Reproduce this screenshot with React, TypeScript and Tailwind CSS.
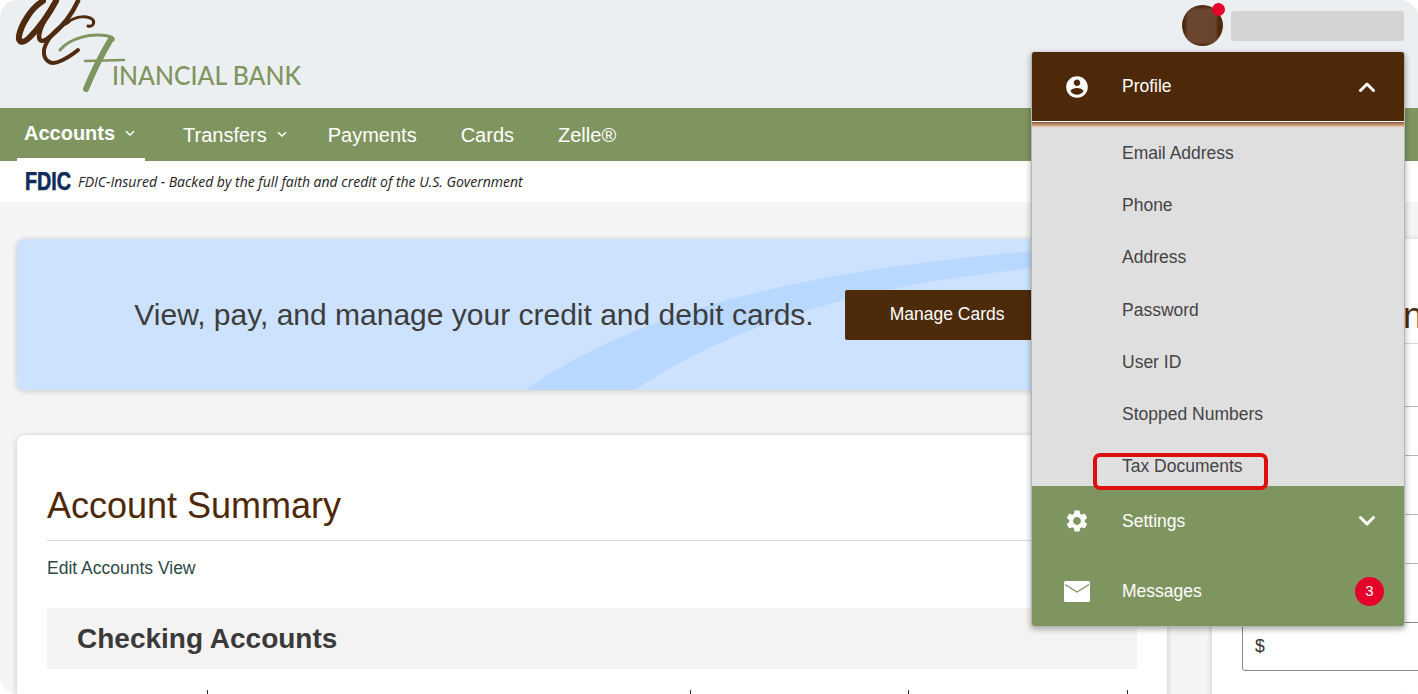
import React from 'react';

const brown = 'M0 0';

const Logo = () => (
  <svg width="320" height="100" viewBox="0 0 320 100" className="block">
    {/* script W and C */}
    <g fill="none" stroke="#4f2a0e" strokeLinecap="round" strokeLinejoin="round">
      <path d="M43 1C31 8 21 25 19 36C18 43 23 44 30 37C40 27 50 12 56 1" strokeWidth="6" />
      <path d="M56 1C48 13 40 26 39 36C39 43 44 42 51 36C62 27 72 14 78 1" strokeWidth="4.5" />
      <path d="M68 22C56 28 46 40 44 50C43 60 50 65 58 62C66 59 72 55 78 50" strokeWidth="4" />
      <path d="M68 22C76 16 88 15 93 20C95 24 92 27 88 26" strokeWidth="3" />
    </g>
    {/* green F */}
    <g fill="none" stroke="#7f9560" strokeLinecap="round">
      <path d="M60 50C70 38 90 33 108 36C112 37 114 38 113 40" strokeWidth="3" />
      <path d="M111 39C102 54 93 72 86 89" strokeWidth="6" />
      <path d="M85 61L124 60" strokeWidth="2.5" />
    </g>
    <text x="112" y="85" fill="#7f9560" fontFamily="Lato, sans-serif" fontSize="26" fontWeight="500" textLength="189" lengthAdjust="spacingAndGlyphs">INANCIAL BANK</text>
  </svg>
);

const Chevron = ({ up }: { up?: boolean }) => (
  <svg width="18" height="12" viewBox="0 0 18 12" fill="none" stroke="#fff" strokeWidth="3" strokeLinecap="round" strokeLinejoin="round">
    <path d={up ? 'M2.5 9.5L9 3l6.5 6.5' : 'M2.5 2.5L9 9l6.5-6.5'} />
  </svg>
);

const SmallChevron = () => (
  <svg width="10" height="7" viewBox="0 0 10 7" fill="none" stroke="#fff" strokeWidth="1.5">
    <path d="M1 1.2L5 5l4-3.8" />
  </svg>
);

const profileItems = ['Email Address', 'Phone', 'Address', 'Password', 'User ID', 'Stopped Numbers'];

const ProfileMenu = () => (
  <div className="absolute left-[1031px] top-[52px] z-10 w-[374px] overflow-hidden rounded-[3px] border border-[#b5b5b5] border-t-0 shadow-[0_2px_6px_rgba(0,0,0,0.35)]">
    <div className="flex h-[69px] items-center bg-[#4d2909] pl-[32px] pr-[28px] text-[17.5px] text-white">
      <svg width="26" height="26" viewBox="0 0 24 24" fill="#fff">
        <path d="M12 2C6.48 2 2 6.48 2 12s4.48 10 10 10 10-4.48 10-10S17.52 2 12 2zm0 3c1.66 0 3 1.34 3 3s-1.34 3-3 3-3-1.34-3-3 1.34-3 3-3zm0 14.2c-2.5 0-4.71-1.28-6-3.22.03-1.99 4-3.08 6-3.08 1.99 0 5.97 1.09 6 3.08-1.29 1.94-3.5 3.22-6 3.22z" />
      </svg>
      <span className="ml-[32px] flex-1">Profile</span>
      <Chevron up />
    </div>
    <div className="h-[1px] bg-white" />
    <div className="h-[5px] bg-gradient-to-b from-[#8a5a35] to-[#f0c8a5]" />
    <div className="flex h-[359px] flex-col bg-[#dfdfdf] pl-[90px] pt-[-1px] text-[17.5px] text-[#444444]">
      {profileItems.map((item) => (
        <div key={item} className="flex h-[52.2px] shrink-0 items-center">{item}</div>
      ))}
      <div className="relative flex h-[52.2px] shrink-0 items-center">
        Tax Documents
        <span className="absolute left-[-29px] top-[13px] h-[37px] w-[175px] rounded-[7px] border-4 border-[#dd0f0f]" />
      </div>
    </div>
    <div className="h-[140px] bg-[#7f9560] text-[17.5px] text-white">
      <div className="flex h-[70px] items-center pl-[32px] pr-[28px]">
        <svg width="26" height="26" viewBox="0 0 24 24" fill="#fff">
          <path d="M19.14 12.94c.04-.3.06-.61.06-.94 0-.32-.02-.64-.07-.94l2.03-1.58c.18-.14.23-.41.12-.61l-1.92-3.32c-.12-.22-.37-.29-.59-.22l-2.39.96c-.5-.38-1.03-.7-1.62-.94l-.36-2.54c-.04-.24-.24-.41-.48-.41h-3.84c-.24 0-.43.17-.47.41l-.36 2.54c-.59.24-1.13.57-1.62.94l-2.39-.96c-.22-.08-.47 0-.59.22L2.74 8.87c-.12.21-.08.47.12.61l2.03 1.58c-.05.3-.09.63-.09.94s.02.64.07.94l-2.03 1.58c-.18.14-.23.41-.12.61l1.92 3.32c.12.22.37.29.59.22l2.39-.96c.5.38 1.03.7 1.62.94l.36 2.54c.05.24.24.41.48.41h3.84c.24 0 .44-.17.47-.41l.36-2.54c.59-.24 1.13-.56 1.62-.94l2.39.96c.22.08.47 0 .59-.22l1.92-3.32c.12-.22.07-.47-.12-.61l-2.01-1.58zM12 15.6c-1.98 0-3.6-1.62-3.6-3.6s1.62-3.6 3.6-3.6 3.6 1.62 3.6 3.6-1.62 3.6-3.6 3.6z" />
        </svg>
        <span className="ml-[32px] flex-1">Settings</span>
        <Chevron />
      </div>
      <div className="flex h-[70px] items-center pl-[32px] pr-[20px]">
        <svg width="26" height="21" viewBox="0 0 26 21">
          <rect width="26" height="21" rx="1.5" fill="#fff" />
          <path d="M1 3.5L13 11l12-7.5" fill="none" stroke="#7f9560" strokeWidth="1.3" />
        </svg>
        <span className="ml-[32px] flex-1">Messages</span>
        <span className="flex h-[29px] w-[29px] items-center justify-center rounded-full bg-[#e4002b] text-[15px]">3</span>
      </div>
    </div>
  </div>
);

export default function App() {
  return (
    <div className="relative h-[694px] w-[1418px] overflow-hidden rounded-[18px] bg-[#f4f4f4] font-['Liberation_Sans',Arial,sans-serif]">
      {/* header */}
      <header className="relative flex h-[108px] bg-[#eceff1]">
        <Logo />
        <div className="absolute right-[14px] top-[5px] flex items-center">
          <div className="relative h-[41px] w-[41px] overflow-hidden rounded-full bg-[#4d290a]">
            <div className="absolute left-[4px] top-[3px] h-[36px] w-[31px] bg-[#6a4530] blur-[1px]" />
          </div>
          <span className="absolute left-[30px] top-[-2px] h-[13px] w-[13px] rounded-full bg-[#e4002b]" />
          <div className="ml-[8px] h-[30px] w-[173px] rounded-[3px] bg-[#d6d4d2]" />
        </div>
      </header>

      {/* main nav */}
      <nav className="flex h-[53px] items-stretch bg-[#7f9560] pl-[17px] text-[20px] text-white">
        <a className="flex w-[128px] items-center gap-[10px] border-b-[3px] border-white pl-[7px] font-bold">
          Accounts <SmallChevron />
        </a>
        <a className="ml-[38px] flex items-center gap-[10px]">
          Transfers <SmallChevron />
        </a>
        <a className="ml-[41px] flex items-center">Payments</a>
        <a className="ml-[44px] flex items-center">Cards</a>
        <a className="ml-[44px] flex items-center">Zelle®</a>
      </nav>

      {/* fdic bar */}
      <div className="flex h-[41px] items-center bg-white pl-[25px]">
        <svg width="46" height="20" viewBox="0 0 46 20">
          <text x="0" y="18" fill="#0f2b5b" stroke="#0f2b5b" strokeWidth="0.6" fontFamily="Liberation Sans, sans-serif" fontWeight="700" fontSize="25" textLength="46" lengthAdjust="spacingAndGlyphs">FDIC</text>
        </svg>
        <span className="ml-[7px] font-['Open_Sans',sans-serif] text-[14px] italic text-[#222222]">
          FDIC-Insured - Backed by the full faith and credit of the U.S. Government
        </span>
      </div>

      {/* content */}
      <main className="flex pl-[17px] pt-[37px]">
        <div className="w-[1150px] shrink-0">
          <section className="relative flex h-[151px] items-center justify-center gap-[31px] overflow-hidden rounded-[8px] bg-[#cce2ff] shadow-[0_1px_6px_rgba(0,0,0,0.18)]">
            <svg className="absolute inset-0" width="1150" height="151" viewBox="0 0 1150 151">
              <path d="M508 151C640 60 820 22 1150 2V20C900 30 740 70 618 151Z" fill="#b9d8ff" />
            </svg>
            <p className="relative text-[30px] text-[#3d3d3d]">View, pay, and manage your credit and debit cards.</p>
            <button className="relative h-[50px] w-[205px] rounded-[2px] bg-[#4d2a0a] text-[17.5px] text-white">Manage Cards</button>
          </section>

          <section className="mt-[45px] h-[300px] rounded-[8px] bg-white px-[30px] pt-[47px] shadow-[0_1px_6px_rgba(0,0,0,0.18)]">
            <h1 className="border-b border-[#d8d8d8] pb-[11px] text-[36px] leading-[47px] text-[#4d290a]">Account Summary</h1>
            <a className="mt-[15px] block text-[17.5px] leading-[24px] text-[#2c4a44]">Edit Accounts View</a>
            <div className="mt-[28px] flex h-[61px] w-[1090px] items-center bg-[#f4f3f2] pl-[30px]">
              <h2 className="text-[28px] font-bold text-[#3a3a3a]">Checking Accounts</h2>
            </div>
            {/* tops of the column headings, cut off by the window */}
            <div className="mt-[21px] flex">
              <span className="ml-[160px] h-[4px] w-px bg-[#333333]" />
              <span className="ml-[482px] h-[4px] w-px bg-[#333333]" />
              <span className="ml-[217px] h-[4px] w-px bg-[#333333]" />
              <span className="ml-[218px] h-[4px] w-px bg-[#333333]" />
            </div>
          </section>
        </div>

        <aside className="ml-[45px] h-[500px] w-[300px] shrink-0 rounded-[8px] bg-white pl-[30px] pt-[1px] shadow-[0_1px_6px_rgba(0,0,0,0.18)]">
          {/* only the last letter of this title shows past the menu */}
          <h2 className="h-[104px] border-b border-[#d8d8d8] pl-[161px] pt-[52px] text-[36px] leading-[47px] text-[#4d290a]">n</h2>
          <div className="h-[63px] border-b border-[#b5b5b5]" />
          <div className="h-[49px] border-b border-[#b5b5b5]" />
          <div className="h-[59px] border-b border-[#b5b5b5]" />
          <div className="h-[49px] border-b border-[#b5b5b5]" />
          <div className="flex h-[107px] items-end">
            <div className="flex h-[49px] w-full items-center rounded-[3px] border border-[#888888] pl-[12px] text-[17.5px] text-[#333333]">$</div>
          </div>
        </aside>
      </main>

      <ProfileMenu />
    </div>
  );
}
